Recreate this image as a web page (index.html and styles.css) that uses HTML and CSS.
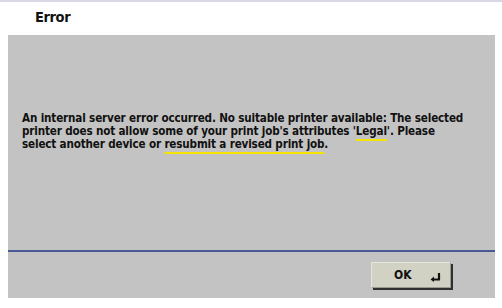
FILE: index.html
```html
<!DOCTYPE html>
<html>
<head>
<meta charset="utf-8">
<link rel="stylesheet" href="styles.css">
</head>
<body>
<div class="screen">
  <header class="header"><span class="title">Error</span></header>
  <main class="panel">
    <section class="message">
      <p class="text">An internal server error occurred. No suitable printer available: The selected<br>printer does not allow some of your print job's attributes '<span class="mark">Legal</span>'. Please<br>select another device or <span class="mark">resubmit a revised print job</span>.</p>
    </section>
    <div class="rule"></div>
    <footer class="footer">
      <button class="ok">
        <span class="ok-label">OK</span>
        <svg class="enter" width="11" height="9" viewBox="0 0 11 9"><path d="M9 0 V6.5 H3.5" fill="none" stroke="#111" stroke-width="2.2"/><path d="M0.5 6.5 L4 3.6 V9 Z" fill="#111"/></svg>
      </button>
    </footer>
  </main>
</div>
</body>
</html>
```

FILE: styles.css
```css
html, body {
  margin: 0;
  padding: 0;
  background: #ffffff;
}
.screen {
  width: 502px;
  height: 308px;
  box-sizing: border-box;
  border-top: 2px solid #d8d8e6;
  background: #ffffff;
  font-family: "DejaVu Sans Condensed", "DejaVu Sans", sans-serif;
  color: #111;
}
.header {
  height: 33px;
  box-sizing: border-box;
  padding: 5px 0 0 35px;
}
.title {
  font-size: 14.5px;
  font-weight: bold;
  letter-spacing: -0.4px;
  line-height: 20px;
}
.panel {
  margin: 0 7px 0 8px;
  height: 263px;
  background: #c3c3c3;
  display: flex;
  flex-direction: column;
}
.message {
  height: 215px;
  box-sizing: border-box;
  padding: 77px 6px 0 14px;
}
.text {
  margin: 0;
  font-size: 11.6px;
  font-weight: bold;
  line-height: 12.8px;
  letter-spacing: -0.16px;
  white-space: nowrap;
}
.mark {
  text-decoration: underline;
  text-decoration-color: #f4e400;
  text-decoration-thickness: 2px;
  text-underline-offset: 4px;
}
.rule {
  height: 2px;
  background: #4b5a96;
}
.footer {
  flex: 1;
  display: flex;
  justify-content: flex-end;
  align-items: flex-start;
  padding: 10px 44px 0 0;
}
.ok {
  width: 80px;
  height: 26px;
  background: #d2d2c4;
  border: 1px solid #e6e6dc;
  border-right-color: #9a9a90;
  border-bottom-color: #9a9a90;
  box-shadow: 2px 2px 0 #303030;
  display: flex;
  align-items: center;
  padding: 0;
  font-family: "DejaVu Sans Condensed", "DejaVu Sans", sans-serif;
  font-weight: bold;
  font-size: 12px;
  color: #111;
}
.ok-label {
  margin-left: 22px;
}
.enter {
  margin-left: auto;
  margin-right: 9px;
  margin-top: 4px;
}
```
